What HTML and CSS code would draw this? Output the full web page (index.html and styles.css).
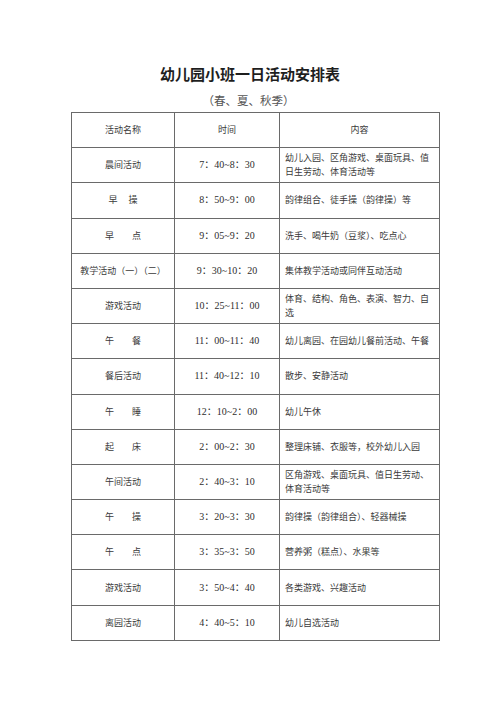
FILE: index.html
```html
<!DOCTYPE html>
<html lang="zh-CN">
<head>
<meta charset="utf-8">
<title>幼儿园小班一日活动安排表</title>
<link rel="stylesheet" href="styles.css">
</head>
<body>
<div class="page">
  <h1 class="title">幼儿园小班一日活动安排表</h1>
  <p class="subtitle">（春、夏、秋季）</p>
  <table class="schedule">
    <colgroup>
      <col class="c-name">
      <col class="c-time">
      <col class="c-content">
    </colgroup>
    <thead>
      <tr><th>活动名称</th><th>时间</th><th>内容</th></tr>
    </thead>
    <tbody>
      <tr><td class="name">晨间活动</td><td class="time">7：40~8：30</td><td class="content">幼儿入园、区角游戏、桌面玩具、值日生劳动、体育活动等</td></tr>
      <tr><td class="name">早　 操</td><td class="time">8：50~9：00</td><td class="content">韵律组合、徒手操（韵律操）等</td></tr>
      <tr><td class="name">早　　点</td><td class="time">9：05~9：20</td><td class="content">洗手、喝牛奶（豆浆）、吃点心</td></tr>
      <tr><td class="name">教学活动（一）（二）</td><td class="time">9：30~10：20</td><td class="content">集体教学活动或同伴互动活动</td></tr>
      <tr><td class="name">游戏活动</td><td class="time">10：25~11：00</td><td class="content">体育、结构、角色、表演、智力、自选</td></tr>
      <tr><td class="name">午　　餐</td><td class="time">11：00~11：40</td><td class="content">幼儿离园、在园幼儿餐前活动、午餐</td></tr>
      <tr><td class="name">餐后活动</td><td class="time">11：40~12：10</td><td class="content">散步、安静活动</td></tr>
      <tr><td class="name">午　　睡</td><td class="time">12：10~2：00</td><td class="content">幼儿午休</td></tr>
      <tr><td class="name">起　　床</td><td class="time">2：00~2：30</td><td class="content">整理床铺、衣服等，校外幼儿入园</td></tr>
      <tr><td class="name">午间活动</td><td class="time">2：40~3：10</td><td class="content">区角游戏、桌面玩具、值日生劳动、体育活动等</td></tr>
      <tr><td class="name">午　　操</td><td class="time">3：20~3：30</td><td class="content">韵律操（韵律组合）、轻器械操</td></tr>
      <tr><td class="name">午　　点</td><td class="time">3：35~3：50</td><td class="content">营养粥（糕点）、水果等</td></tr>
      <tr><td class="name">游戏活动</td><td class="time">3：50~4：40</td><td class="content">各类游戏、兴趣活动</td></tr>
      <tr><td class="name">离园活动</td><td class="time">4：40~5：10</td><td class="content">幼儿自选活动</td></tr>
    </tbody>
  </table>
</div>
</body>
</html>
```
FILE: styles.css
```css
html, body {
  margin: 0;
  padding: 0;
  background: #ffffff;
}

.page {
  width: 500px;
  height: 707px;
  overflow: hidden;
  font-family: "Noto Sans CJK SC", "Noto Sans", sans-serif;
  color: #333333;
}

.title {
  margin: 64px 0 0 0;
  font-size: 15px;
  line-height: 20px;
  font-weight: 700;
  text-align: center;
  color: #1e1e1e;
}

.subtitle {
  margin: 8px 0 0 0;
  padding-right: 3px;
  font-size: 11.5px;
  line-height: 16px;
  text-align: center;
  color: #555555;
}

.schedule {
  margin: 4px 0 0 71px;
  width: 368px;
  border-collapse: collapse;
  table-layout: fixed;
}

.c-name { width: 103px; }
.c-time { width: 105px; }
.c-content { width: 160px; }

.schedule th,
.schedule td {
  border: 1px solid #6a6a6a;
  height: 34.2px;
  padding: 0;
  font-size: 9px;
  line-height: 14px;
  font-weight: 400;
  color: #3a3a3a;
  vertical-align: middle;
}

.schedule th {
  text-align: center;
}

.schedule td.name {
  text-align: center;
  white-space: nowrap;
}

.schedule td.time {
  text-align: center;
  font-family: "Liberation Serif", "Noto Sans CJK SC", serif;
  font-size: 10px;
  color: #2e2e2e;
}

.schedule td.content {
  text-align: left;
  padding: 0 8px 0 5px;
}
```
